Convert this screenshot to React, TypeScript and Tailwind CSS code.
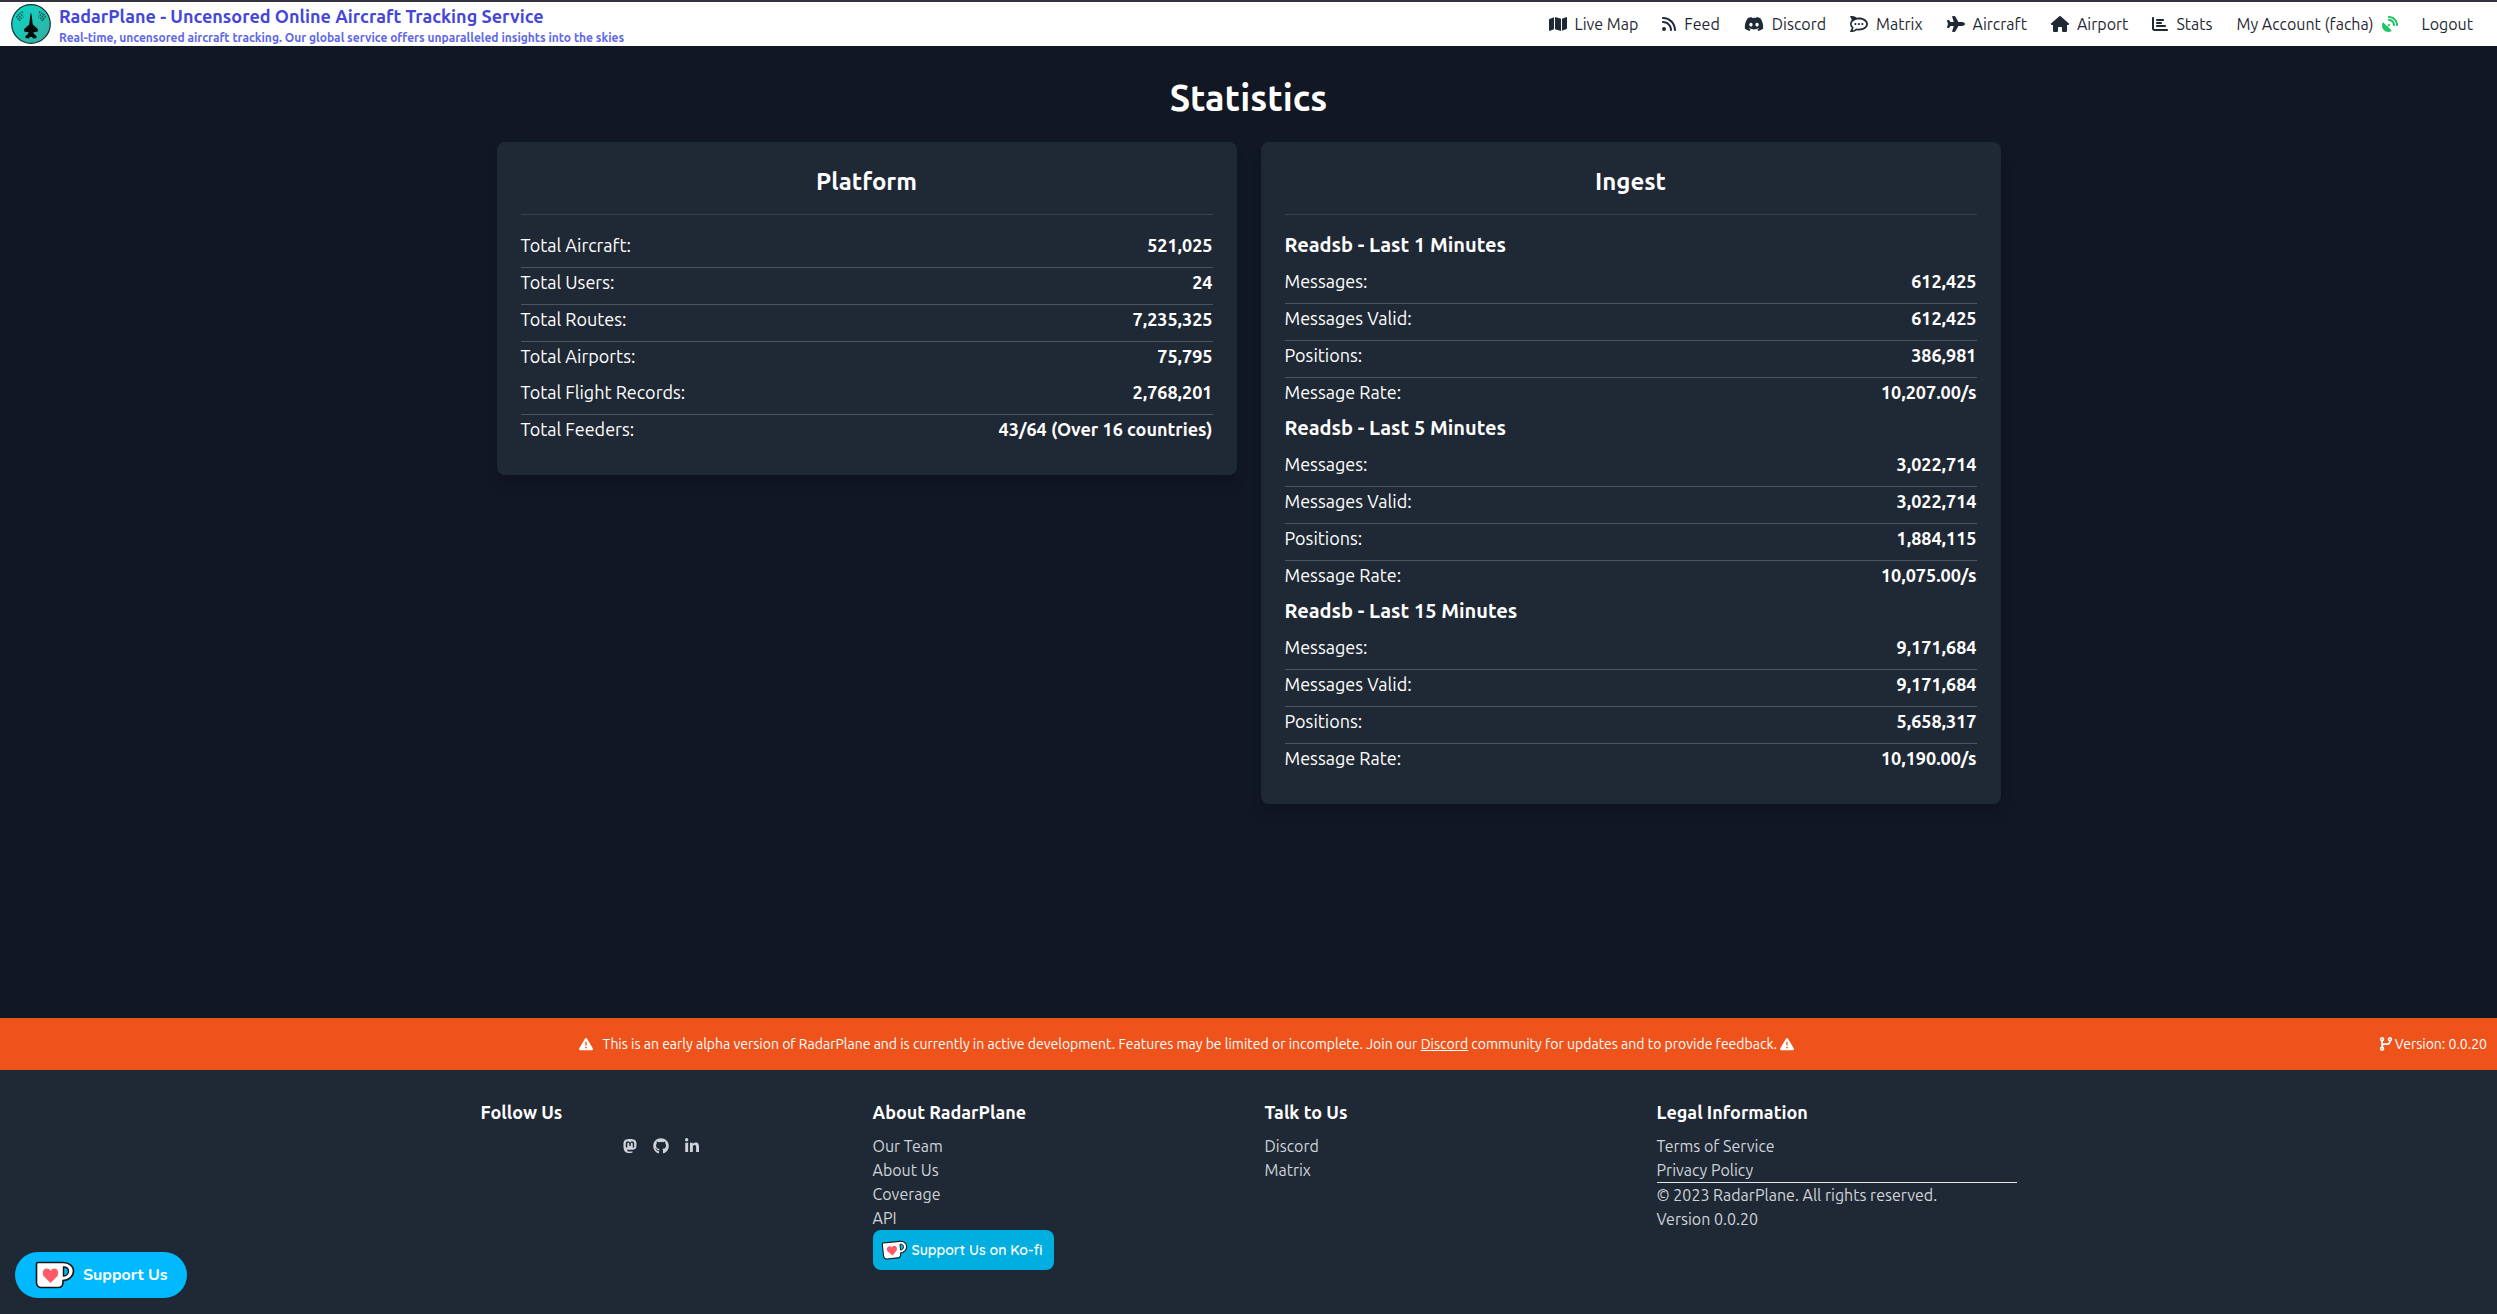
import type { ReactNode } from "react";
import {
  FaChartBar,
  FaCodeBranch,
  FaDiscord,
  FaGithub,
  FaHouse,
  FaLinkedinIn,
  FaMap,
  FaMastodon,
  FaPlane,
  FaRocketchat,
  FaRss,
  FaSatelliteDish,
  FaTriangleExclamation,
} from "react-icons/fa6";

type Stat = { label: string; value: string; divider?: boolean };

const navLinks = [
  { label: "Live Map", icon: <FaMap className="h-4 w-[18px]" /> },
  { label: "Feed", icon: <FaRss className="h-4 w-[14px]" /> },
  { label: "Discord", icon: <FaDiscord className="h-5 w-5" /> },
  { label: "Matrix", icon: <FaRocketchat className="h-[18px] w-[18px]" /> },
  { label: "Aircraft", icon: <FaPlane className="h-[18px] w-[18px]" /> },
  { label: "Airport", icon: <FaHouse className="h-4 w-[18px]" /> },
  { label: "Stats", icon: <FaChartBar className="h-4 w-4" /> },
];

const platformStats: Stat[] = [
  { label: "Total Aircraft:", value: "521,025", divider: true },
  { label: "Total Users:", value: "24", divider: true },
  { label: "Total Routes:", value: "7,235,325", divider: true },
  { label: "Total Airports:", value: "75,795" },
  { label: "Total Flight Records:", value: "2,768,201", divider: true },
  { label: "Total Feeders:", value: "43/64 (Over 16 countries)" },
];

const ingestStats = [
  { minutes: 1, messages: "612,425", valid: "612,425", positions: "386,981", rate: "10,207.00/s" },
  { minutes: 5, messages: "3,022,714", valid: "3,022,714", positions: "1,884,115", rate: "10,075.00/s" },
  { minutes: 15, messages: "9,171,684", valid: "9,171,684", positions: "5,658,317", rate: "10,190.00/s" },
];

export default function App() {
  return (
    <div className="flex min-h-screen flex-col border-t-2 border-[#343342] bg-[#111723] font-['Ubuntu','Open_Sans',sans-serif] text-white">
      <Header />

      <main className="mx-auto w-full max-w-screen-2xl flex-1 px-4 pt-8">
        <h1 className="mb-6 text-center text-4xl font-bold">Statistics</h1>
        <div className="grid grid-cols-1 items-start gap-6 md:grid-cols-2">
          <Card title="Platform">
            <StatList stats={platformStats} />
          </Card>
          <Card title="Ingest">
            {ingestStats.map((s) => (
              <section key={s.minutes}>
                <h3 className="mb-2 text-xl font-bold">Readsb - Last {s.minutes} Minutes</h3>
                <StatList
                  stats={[
                    { label: "Messages:", value: s.messages, divider: true },
                    { label: "Messages Valid:", value: s.valid, divider: true },
                    { label: "Positions:", value: s.positions, divider: true },
                    { label: "Message Rate:", value: s.rate },
                  ]}
                />
              </section>
            ))}
          </Card>
        </div>
      </main>

      <AlphaBanner />
      <Footer />

      <button
        type="button"
        className="fixed bottom-4 left-[15px] flex h-[46px] w-[172px] items-center gap-2 rounded-full bg-[#00b9fe] pl-5 font-['Nunito','Open_Sans',sans-serif] text-base font-bold"
      >
        <Cup className="h-7 w-10" />
        Support Us
      </button>
    </div>
  );
}

function Header() {
  return (
    <header className="flex items-center justify-between bg-white pr-6 pl-[11px]">
      <a href="#" className="flex items-center gap-2">
        <Logo />
        <span className="flex flex-col">
          <span className="text-lg font-bold text-[#4547d8]">
            RadarPlane - Uncensored Online Aircraft Tracking Service
          </span>
          <span className="text-xs font-bold text-[#6067ea]">
            Real-time, uncensored aircraft tracking. Our global service offers unparalleled insights into the skies
          </span>
        </span>
      </a>
      <nav className="flex items-center gap-6 text-[#1f2935]">
        {navLinks.map((l) => (
          <a key={l.label} href="#" className="flex items-center gap-2">
            {l.icon}
            {l.label}
          </a>
        ))}
        <a href="#" className="flex items-center gap-2">
          My Account (facha)
          <FaSatelliteDish className="h-4 w-4 text-[#21c463]" />
        </a>
        <a href="#">Logout</a>
      </nav>
    </header>
  );
}

function Card({ title, children }: { title: string; children: ReactNode }) {
  return (
    <section className="rounded-lg bg-[#1f2935] p-6 shadow-lg">
      <h2 className="mb-4 text-center text-2xl font-bold">{title}</h2>
      <hr className="mb-4 border-[#36424e]" />
      {children}
    </section>
  );
}

function StatList({ stats }: { stats: Stat[] }) {
  return (
    <dl className="text-lg">
      {stats.map((s) => (
        <div
          key={s.label}
          className={s.divider ? "flex justify-between border-b border-[#4a5562] pb-2" : "flex justify-between pb-2"}
        >
          <dt>{s.label}</dt>
          <dd className="font-bold">{s.value}</dd>
        </div>
      ))}
    </dl>
  );
}

function AlphaBanner() {
  return (
    <div className="flex items-center justify-between gap-4 bg-[#ee531b] px-[10px] py-4 text-sm">
      <p className="flex-1 text-center">
        <FaTriangleExclamation className="mr-[10px] inline h-[14px] w-[14px] align-[-2px]" />
        This is an early alpha version of RadarPlane and is currently in active development. Features may be limited or
        incomplete. Join our{" "}
        <a href="#" className="underline">
          Discord
        </a>{" "}
        community for updates and to provide feedback.{" "}
        <FaTriangleExclamation className="inline h-[14px] w-[14px] align-[-2px]" />
      </p>
      <span className="flex items-center gap-[2px]">
        <FaCodeBranch className="h-[14px] w-[14px]" />
        Version: 0.0.20
      </span>
    </div>
  );
}

function Footer() {
  return (
    <footer className="bg-[#1f2935] pt-7 pb-11">
      <div className="mx-auto grid max-w-screen-2xl grid-cols-2 gap-8 text-[#cfd3d9] md:grid-cols-4">
        <FooterColumn title="Follow Us">
          <div className="flex h-6 items-center justify-center gap-4">
            <a href="#" aria-label="Mastodon"><FaMastodon className="h-4 w-[14px]" /></a>
            <a href="#" aria-label="GitHub"><FaGithub className="h-4 w-4" /></a>
            <a href="#" aria-label="LinkedIn"><FaLinkedinIn className="h-4 w-[14px]" /></a>
          </div>
        </FooterColumn>
        <FooterColumn title="About RadarPlane">
          <FooterLinks links={["Our Team", "About Us", "Coverage", "API"]} />
          <button
            type="button"
            className="flex h-10 w-[181px] items-center gap-1 rounded-lg bg-[#00aedf] pl-[9px] font-['Quicksand','Open_Sans',sans-serif] text-sm font-semibold whitespace-nowrap text-white"
          >
            <Cup className="h-6 w-[26px] -rotate-6" />
            Support Us on Ko-fi
          </button>
        </FooterColumn>
        <FooterColumn title="Talk to Us">
          <FooterLinks links={["Discord", "Matrix"]} />
        </FooterColumn>
        <FooterColumn title="Legal Information">
          <FooterLinks links={["Terms of Service", "Privacy Policy"]} />
          <hr className="border-[#e2e5e9]" />
          <p>© 2023 RadarPlane. All rights reserved.</p>
          <p>Version 0.0.20</p>
        </FooterColumn>
      </div>
    </footer>
  );
}

function FooterColumn({ title, children }: { title: string; children: ReactNode }) {
  return (
    <div>
      <h3 className="mb-2 text-lg font-bold text-white">{title}</h3>
      {children}
    </div>
  );
}

function FooterLinks({ links }: { links: string[] }) {
  return (
    <ul>
      {links.map((l) => (
        <li key={l}>
          <a href="#">{l}</a>
        </li>
      ))}
    </ul>
  );
}

function Logo() {
  return (
    <svg viewBox="0 0 40 40" className="h-10 w-10" aria-hidden="true">
      <defs>
        <linearGradient id="logo-fill" x1="0" y1="0" x2="1" y2="1">
          <stop offset="0" stopColor="#06dccb" />
          <stop offset="1" stopColor="#38aa9d" />
        </linearGradient>
      </defs>
      <circle cx="20" cy="20" r="19.3" fill="url(#logo-fill)" stroke="#16302f" strokeWidth="1.2" />
      <path
        d="M20 8.500l.8 3.500.6 5.500.4 3 5 4.500v2.500l-4.300.8.5 1.700 2.500 2v2l-3.200.5-1.300-1.500h-2l-1.300 1.500-3.200-.5v-2l2.500-2 .5-1.700-4.300-.8v-2.500l5-4.500.4-3 .6-5.500z"
        fill="#050b0b"
      />
      <g fill="none" stroke="#0c4a47" strokeWidth="1.500" strokeDasharray="1.500 1">
        <path d="M5.500 13.500q1.500-4 6.500-5.500M7 15.500q1.500-4 5.500-5M8.500 17q1-3 4-4" />
        <path d="M34.500 13.500q-1.500-4-6.500-5.500M33 15.500q-1.500-4-5.500-5M31.500 17q-1-3-4-4" />
      </g>
    </svg>
  );
}

// Ko-fi mug
function Cup({ className }: { className: string }) {
  return (
    <svg viewBox="0 0 40 28" className={className} aria-hidden="true">
      <path
        d="M3 1.500h25c6 0 10.500 3.500 10.500 8.500s-4.500 9.500-10.500 9.500v2c0 3-2 5-5 5H6.500c-3 0-5-2-5-5V3c0-1 .5-1.500 1.500-1.500z"
        fill="#fff"
        stroke="#161616"
        strokeWidth="1.600"
      />
      <path d="M28.500 6c3.500 0 5 1.500 5 4.200S31.500 15 28.500 15z" fill="#00b4ef" stroke="#161616" strokeWidth="1.400" />
      <path
        d="M15.500 22l-6.500-6.500c-2.500-2.700-1-8 2.700-8 1.800 0 2.800.8 3.800 2.200 1-1.400 2-2.200 3.800-2.200 3.700 0 5.200 5.300 2.700 8z"
        fill="#ff5a67"
      />
    </svg>
  );
}
